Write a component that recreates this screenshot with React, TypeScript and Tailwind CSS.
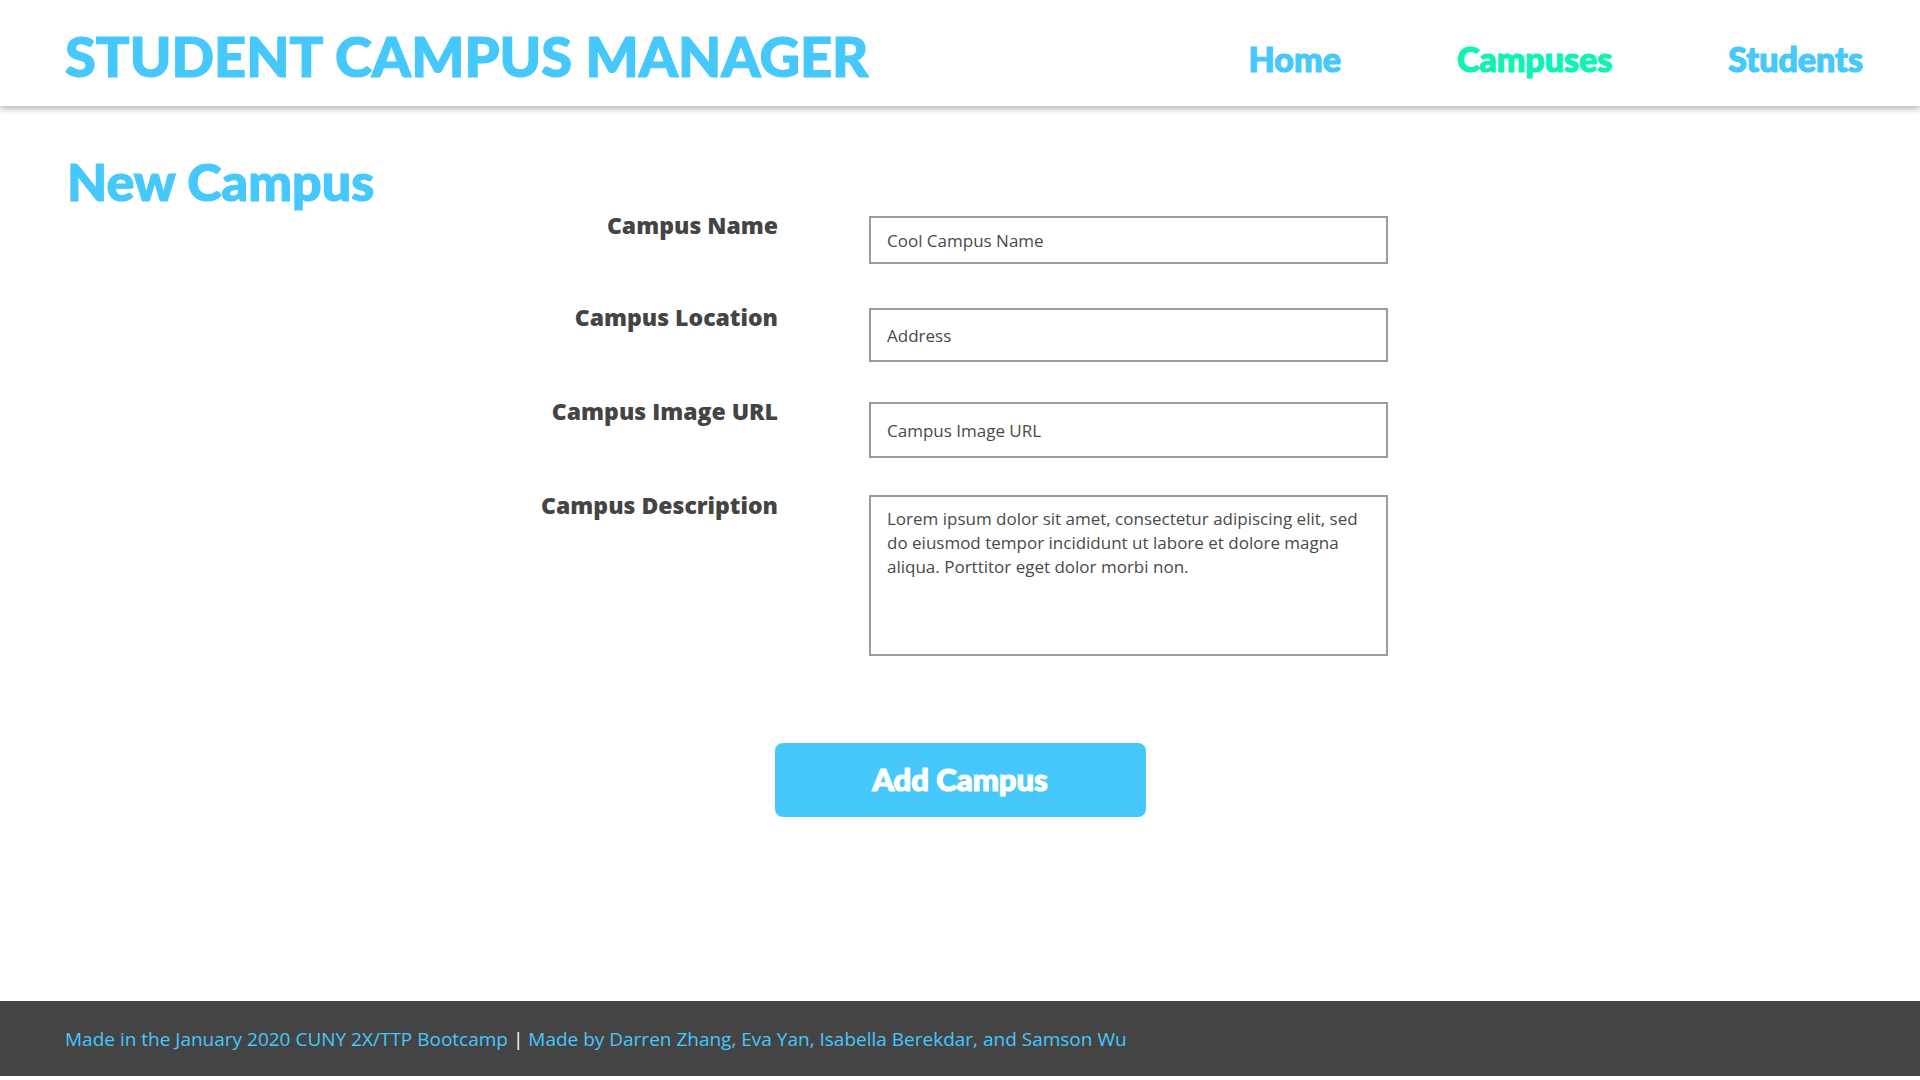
import { useState } from 'react';

const BLUE = 'text-[#46c8fc]';
const HEAVY = "font-['Lato',sans-serif] font-black [-webkit-text-stroke:1.2px]";

const NavBar = () => {
  return (
    <header className="relative z-10 h-[106px] shrink-0 bg-white shadow-[0_3px_6px_rgba(0,0,0,0.28)] flex items-center justify-between pl-[65px] pr-[57px] pt-[6px]">
      <h1 className={`${HEAVY} text-[56px] leading-none ${BLUE}`}>STUDENT CAMPUS MANAGER</h1>
      <nav className={`flex items-center gap-[116px] pt-[6px] ${HEAVY} [-webkit-text-stroke:0.8px] text-[34px] leading-none`}>
        <a className={BLUE}>Home</a>
        <a className="text-[#0cf3b3]">Campuses</a>
        <a className={BLUE}>Students</a>
      </nav>
    </header>
  );
};

interface FieldProps {
  label: string;
  placeholder: string;
  height: string;
  top: string;
}

const labelCls =
  "w-[778px] text-right font-['Open_Sans',sans-serif] font-extrabold text-[23px] leading-none text-[#444]";

const Field = ({ label, placeholder, height, top }: FieldProps) => (
  <div className={`flex items-start ${top}`}>
    <label className={`${labelCls} -mt-[2px]`}>{label}</label>
    <input
      placeholder={placeholder}
      className={`ml-[91px] w-[519px] ${height} border-2 border-[#9b9b9b] px-[16px] font-['Open_Sans',sans-serif] text-[17px] text-[#444] placeholder:text-[#4a4a4a] outline-none`}
    />
  </div>
);

const NewCampus = () => {
  const [desc] = useState(
    'Lorem ipsum dolor sit amet, consectetur adipiscing elit, sed do eiusmod tempor incididunt ut labore et dolore magna aliqua. Porttitor eget dolor morbi non.'
  );

  return (
    <main className="flex-1 flex flex-col">
      <h2 className={`pl-[67px] mt-[44px] ${HEAVY} text-[52px] leading-[1.2] ${BLUE}`}>New Campus</h2>
      <form className="flex flex-col" onSubmit={(e) => e.preventDefault()}>
        <Field label="Campus Name" placeholder="Cool Campus Name" height="h-[48px]" top="mt-[4px]" />
        <Field label="Campus Location" placeholder="Address" height="h-[54px]" top="mt-[44px]" />
        <Field label="Campus Image URL" placeholder="Campus Image URL" height="h-[56px]" top="mt-[40px]" />
        <div className="flex items-start mt-[37px]">
          <label className={`${labelCls} -mt-[1px]`}>Campus Description</label>
          <textarea
            placeholder={desc}
            className="ml-[91px] w-[519px] h-[161px] resize-none border-2 border-[#9b9b9b] px-[16px] py-[10px] font-['Open_Sans',sans-serif] text-[17px] leading-[24px] text-[#444] placeholder:text-[#4a4a4a] outline-none"
          />
        </div>
        <div className="flex justify-center mt-[87px]">
          <button
            type="submit"
            className={`w-[371px] h-[74px] rounded-[8px] bg-[#46c8fc] text-white ${HEAVY} [-webkit-text-stroke:0.8px] text-[31px] leading-none pb-[2px]`}
          >
            Add Campus
          </button>
        </div>
      </form>
    </main>
  );
};

const Footer = () => (
  <footer className="h-[75px] shrink-0 bg-[#444444] flex items-center pl-[65px] pt-[2px] font-['Open_Sans',sans-serif] text-[19px] whitespace-pre">
    <span className={BLUE}>Made in the January 2020 CUNY 2X/TTP Bootcamp</span>
    <span className="text-white"> | </span>
    <span className={BLUE}>Made by Darren Zhang, Eva Yan, Isabella Berekdar, and Samson Wu</span>
  </footer>
);

export default function App() {
  return (
    <div className="h-screen w-full bg-white flex flex-col overflow-hidden">
      <NavBar />
      <NewCampus />
      <Footer />
      <div className="h-[4px] shrink-0 bg-white" />
    </div>
  );
}
